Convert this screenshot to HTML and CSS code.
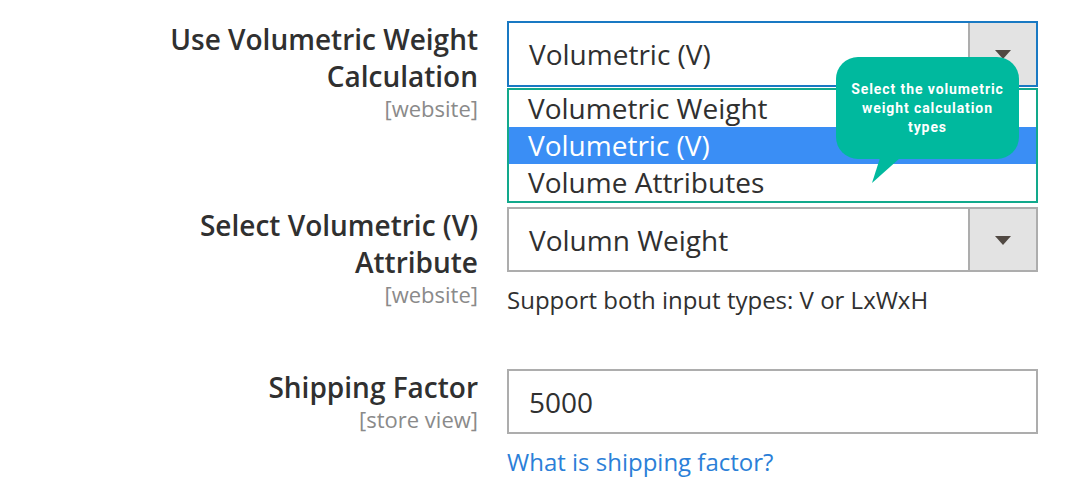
FILE: index.html
```html
<!DOCTYPE html>
<html lang="en">
<head>
  <meta charset="UTF-8" />
  <title>Volumetric Weight Settings</title>
  <link rel="stylesheet" href="styles.css">
</head>
<body>
  <div class="config">
    <div class="field">
      <div class="label">
        <span class="title">Use Volumetric Weight Calculation</span>
        <span class="scope">[website]</span>
      </div>
      <div class="control">
        <div class="select is-focused">
          <span class="value">Volumetric (V)</span>
          <span class="arrow"></span>
        </div>
        <ul class="options">
          <li>Volumetric Weight</li>
          <li class="selected">Volumetric (V)</li>
          <li>Volume Attributes</li>
        </ul>
        <div class="tooltip">Select the volumetric weight calculation types</div>
      </div>
    </div>

    <div class="field">
      <div class="label">
        <span class="title">Select Volumetric (V) Attribute</span>
        <span class="scope">[website]</span>
      </div>
      <div class="control">
        <div class="select">
          <span class="value">Volumn Weight</span>
          <span class="arrow"></span>
        </div>
        <p class="note">Support both input types: V or LxWxH</p>
      </div>
    </div>

    <div class="field">
      <div class="label">
        <span class="title">Shipping Factor</span>
        <span class="scope">[store view]</span>
      </div>
      <div class="control">
        <div class="input">5000</div>
        <a class="note link" href="#">What is shipping factor?</a>
      </div>
    </div>
  </div>
</body>
</html>
```

FILE: styles.css
```css
body {
  margin: 0;
  background: #ffffff;
  font-family: "Open Sans", sans-serif;
  color: #303030;
}

.config {
  padding-top: 21px;
}

.field {
  display: grid;
  grid-template-columns: 478px 531px;
  column-gap: 29px;
  margin-bottom: 4px;
}

.field:nth-child(2) {
  margin-bottom: 53px;
}

.label {
  display: flex;
  flex-direction: column;
  align-items: flex-end;
  text-align: right;
  padding-left: 150px;
}

.title {
  font-size: 28px;
  font-weight: 600;
  line-height: 37px;
}

.scope {
  font-size: 22px;
  line-height: 26px;
  color: #8a8a8a;
}

.control {
  position: relative;
}

.select,
.input {
  display: flex;
  align-items: center;
  height: 65px;
  box-sizing: border-box;
  border: 2px solid #adadad;
  font-size: 28px;
  padding-left: 20px;
}

.select.is-focused {
  border-color: #1979c3;
  height: 66px;
}

.select .value {
  flex: 1;
}

.arrow {
  align-self: stretch;
  width: 66px;
  background: #e3e3e3;
  border-left: 2px solid #adadad;
  position: relative;
}

.arrow::after {
  content: "";
  position: absolute;
  left: 50%;
  top: 50%;
  margin: -4px 0 0 -8px;
  border-left: 8px solid transparent;
  border-right: 8px solid transparent;
  border-top: 9px solid #514943;
}

.options {
  list-style: none;
  margin: 1px 0 0;
  padding: 0;
  border: 2px solid #12a98c;
}

.options li {
  height: 37px;
  line-height: 37px;
  font-size: 28px;
  padding-left: 19px;
}

.options li.selected {
  background: #3a8ef5;
  color: #ffffff;
}

.tooltip {
  position: absolute;
  top: 36px;
  left: 329px;
  width: 183px;
  height: 102px;
  box-sizing: border-box;
  padding: 23px 12px 0;
  border-radius: 22px;
  background: #00b99e;
  color: #ffffff;
  font-family: Roboto, sans-serif;
  font-weight: 700;
  font-size: 14px;
  line-height: 19px;
  letter-spacing: 0.9px;
  text-align: center;
}

.tooltip::after {
  content: "";
  position: absolute;
  left: 36px;
  bottom: -24px;
  width: 28px;
  height: 25px;
  background: #00b99e;
  clip-path: polygon(8px 0, 28px 0, 0 100%);
}

.note {
  display: block;
  margin: 12px 0 0;
  font-size: 24px;
  line-height: 32px;
}

.link {
  color: #2b7fd8;
  text-decoration: none;
}
```
